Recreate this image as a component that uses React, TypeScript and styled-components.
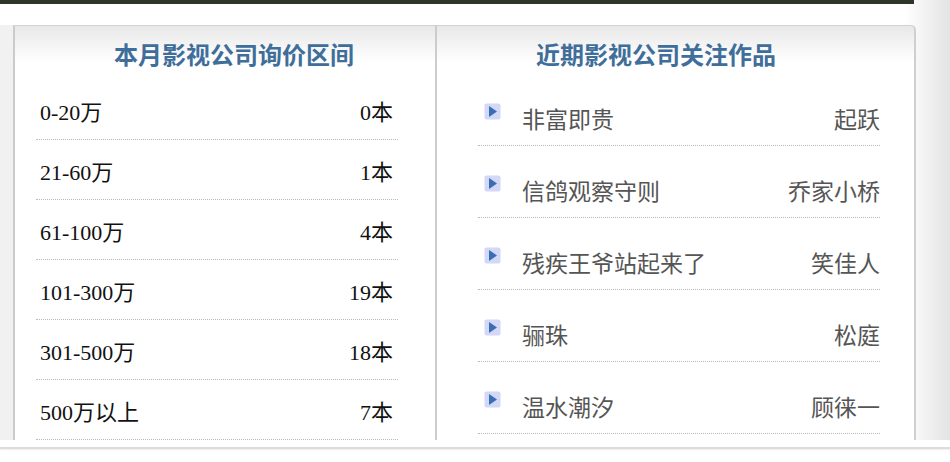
import styled, { createGlobalStyle } from 'styled-components'

const GlobalStyle = createGlobalStyle`
  html, body {
    margin: 0;
    padding: 0;
    background: #ffffff;
  }
`

const priceRanges = [
  { range: '0-20万', count: '0本' },
  { range: '21-60万', count: '1本' },
  { range: '61-100万', count: '4本' },
  { range: '101-300万', count: '19本' },
  { range: '301-500万', count: '18本' },
  { range: '500万以上', count: '7本' },
]

const watchedWorks = [
  { title: '非富即贵', author: '起跃' },
  { title: '信鸽观察守则', author: '乔家小桥' },
  { title: '残疾王爷站起来了', author: '笑佳人' },
  { title: '骊珠', author: '松庭' },
  { title: '温水潮汐', author: '顾徕一' },
]

const PlayIcon = () => (
  <svg width="17" height="17" viewBox="0 0 17 17">
    <defs>
      <filter id="soft" x="-20%" y="-20%" width="140%" height="140%">
        <feGaussianBlur stdDeviation="0.7" />
      </filter>
    </defs>
    <rect x="0.5" y="0.5" width="16" height="16" rx="2" fill="#d3d8f6" filter="url(#soft)" />
    <path d="M5 3 L13 8.5 L5 14 Z" fill="#3a6db3" />
  </svg>
)

export const App = () => {
  return (
    <Page>
      <GlobalStyle />
      <TopBar />
      <Stage>
        <Gutter />
        <Panel>
          <Column $width={420}>
            <Header $shift={9}>本月影视公司询价区间</Header>
            <List $top={6} $inset="0 37px 0 21px">
              {priceRanges.map((item) => (
                <PriceRow key={item.range}>
                  <span>{item.range}</span>
                  <span>{item.count}</span>
                </PriceRow>
              ))}
            </List>
          </Column>
          <Divider />
          <Column $width={476}>
            <Header $shift={-19}>近期影视公司关注作品</Header>
            <List $top={0} $inset="0 33px 0 41px">
              {watchedWorks.map((item) => (
                <WorkRow key={item.title}>
                  <IconBox>
                    <PlayIcon />
                  </IconBox>
                  <WorkTitle>{item.title}</WorkTitle>
                  <WorkAuthor>{item.author}</WorkAuthor>
                </WorkRow>
              ))}
            </List>
          </Column>
        </Panel>
      </Stage>
      <Footer>
        <FooterRule />
      </Footer>
    </Page>
  )
}

export default App

const Page = styled.div`
  width: 950px;
  height: 462px;
  overflow: hidden;
  background: linear-gradient(
    to right,
    #ffffff 0,
    #ffffff 905px,
    #f7f7f7 917px,
    #e3e3e3 950px
  );
`

const TopBar = styled.div`
  width: 914px;
  height: 4px;
  background: #2d3729;
`

const Stage = styled.div`
  display: flex;
  padding-top: 21px;
`

const Gutter = styled.div`
  width: 13px;
  height: 415px;
  background: #f1f1f1;
`

const Panel = styled.div`
  display: flex;
  box-sizing: border-box;
  width: 903px;
  height: 415px;
  overflow: hidden;
  border-top: 1px solid #d2d2d2;
  border-left: 2px solid #cbcbcb;
  border-right: 2px solid #cfcfcf;
  border-top-right-radius: 5px;
  background: linear-gradient(#e8e8e8 0, #f6f6f6 22px, #ffffff 36px);
`

const Column = styled.div<{ $width: number }>`
  width: ${(p) => p.$width}px;
  flex-shrink: 0;
`

const Divider = styled.div`
  width: 2px;
  flex-shrink: 0;
  background: #cccccc;
`

const Header = styled.h2<{ $shift: number }>`
  margin: 0;
  box-sizing: border-box;
  height: 48px;
  padding-top: 10px;
  padding-left: ${(p) => Math.max(p.$shift, 0) * 2}px;
  padding-right: ${(p) => Math.max(-p.$shift, 0) * 2}px;
  line-height: 36px;
  text-align: center;
  font-family: 'Noto Sans CJK SC', sans-serif;
  font-size: 24px;
  font-weight: 700;
  color: #3f6e9a;
`

const List = styled.div<{ $top: number; $inset: string }>`
  display: flex;
  flex-direction: column;
  margin: ${(p) => p.$inset};
  padding-top: ${(p) => p.$top}px;
`

const PriceRow = styled.div`
  display: flex;
  align-items: center;
  justify-content: space-between;
  box-sizing: border-box;
  height: 60px;
  padding: 0 5px 0 4px;
  border-bottom: 1px dotted #b8b8b8;
  font-family: 'Liberation Serif', 'Noto Sans CJK SC', serif;
  font-size: 22px;
  color: #111111;
`

const WorkRow = styled.div`
  display: flex;
  align-items: center;
  box-sizing: border-box;
  height: 72px;
  padding: 16px 0 0 6px;
  border-bottom: 1px dotted #b8b8b8;
  font-family: 'Noto Sans CJK SC', sans-serif;
  font-size: 23px;
  color: #555555;
`

const IconBox = styled.span`
  display: flex;
  width: 17px;
  height: 17px;
  margin: 0 21px 12px 0;
`

const WorkTitle = styled.span`
  flex: 1;
`

const WorkAuthor = styled.span`
  text-align: right;
`

const Footer = styled.div`
  height: 22px;
  padding-top: 7px;
  box-sizing: border-box;
  background: #ffffff;
`

const FooterRule = styled.div`
  height: 2px;
  background: #dcdcdc;
  box-shadow: 0 1px 2px rgba(0, 0, 0, 0.08);
`
